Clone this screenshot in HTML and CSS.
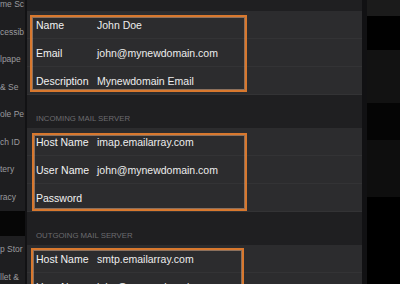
FILE: index.html
```html
<!DOCTYPE html>
<html lang="en">
<head>
  <meta charset="UTF-8">
  <meta name="viewport" content="width=device-width, initial-scale=1.0">
  <title>Mail Account Settings</title>
  <link rel="stylesheet" href="styles.css">
</head>
<body>

  <div class="screen">
    <div class="sidebar">
      <ul class="side-list first">
        <li>me Sc</li>
        <li>cessib</li>
        <li>lpape</li>
        <li>&amp; Se</li>
        <li>ole Pe</li>
        <li>ch ID</li>
        <li>tery</li>
        <li>racy</li>
      </ul>
      <div class="side-gap"></div>
      <ul class="side-list">
        <li>p Stor</li>
        <li>llet &amp;</li>
      </ul>
    </div>

    <div class="divider"></div>

    <div class="main">
      <div class="top-gap"></div>

      <div class="group">
        <div class="row"><span class="label">Name</span><span class="value">John Doe</span></div>
        <div class="row"><span class="label">Email</span><span class="value">john@mynewdomain.com</span></div>
        <div class="row"><span class="label">Description</span><span class="value">Mynewdomain Email</span></div>
        <div class="highlight hl-account"></div>
      </div>

      <div class="section-header">Incoming Mail Server</div>

      <div class="group">
        <div class="row"><span class="label">Host Name</span><span class="value">imap.emailarray.com</span></div>
        <div class="row"><span class="label">User Name</span><span class="value">john@mynewdomain.com</span></div>
        <div class="row"><span class="label">Password</span><span class="value"></span></div>
        <div class="highlight hl-incoming"></div>
      </div>

      <div class="section-header">Outgoing Mail Server</div>

      <div class="group">
        <div class="row"><span class="label">Host Name</span><span class="value">smtp.emailarray.com</span></div>
        <div class="row"><span class="label">User Name</span><span class="value">john@mynewdomain.com</span></div>
        <div class="highlight hl-outgoing"></div>
      </div>
    </div>

    <div class="backdrop">
      <div class="band b1"></div>
      <div class="band b2"></div>
      <div class="band b3"></div>
      <div class="band b4"></div>
      <div class="band b5"></div>
      <div class="band b6"></div>
    </div>
  </div>

</body>
</html>
```

FILE: styles.css
```css
body {
  margin: 0;
  padding: 0;
  background: #000;
  font-family: 'Liberation Sans', Arial, sans-serif;
  overflow: hidden;
}

.screen {
  display: flex;
  width: 400px;
  height: 284px;
  overflow: hidden;
}

.sidebar {
  width: 25px;
  flex-shrink: 0;
  background-color: #1e1e20;
  overflow: hidden;
  white-space: nowrap;
}

.side-list {
  list-style: none;
  margin: 0;
  padding: 0;
}

.side-list.first {
  margin-top: -9px;
}

.side-list li {
  height: 27.5px;
  line-height: 27.5px;
  font-size: 8.5px;
  color: #9a9a9e;
}

.side-gap {
  height: 25px;
  background-color: #060606;
}

.divider {
  width: 2px;
  flex-shrink: 0;
  background-color: #121214;
}

.main {
  width: 335px;
  flex-shrink: 0;
  background-color: #1f1f21;
}

.top-gap {
  height: 11px;
}

.group {
  position: relative;
  background-color: #2c2c2e;
}

.row {
  display: flex;
  align-items: center;
  height: 27px;
  border-bottom: 1px solid #333335;
  font-size: 10.5px;
  color: #f2f2f2;
}

.row:last-of-type {
  border-bottom: none;
  height: 28px;
}

.label {
  width: 61px;
  padding-left: 9px;
  flex-shrink: 0;
}

.value {
  color: #ededed;
}

.section-header {
  height: 33px;
  box-sizing: border-box;
  padding: 19px 0 0 9px;
  font-size: 7.8px;
  text-transform: uppercase;
  color: #6c6c70;
}

/* annotation boxes drawn over the cells */
.highlight {
  position: absolute;
  border: 2px solid #d8782e;
  box-shadow: inset 0 0 0 1px rgba(255, 196, 150, 0.45);
}

.hl-account {
  left: 3px;
  top: 4px;
  width: 213px;
  height: 73px;
}

.hl-incoming {
  left: 5px;
  top: 5px;
  width: 211px;
  height: 74px;
}

.hl-outgoing {
  left: 4px;
  top: 3px;
  width: 209px;
  height: 80px;
}

.backdrop {
  flex: 1;
  display: flex;
  flex-direction: column;
  background-color: #000;
  border-left: 5px solid #111113;
}

.b1 { height: 16px; background-color: #1b1b1b; }
.b2 { height: 34px; background-color: #010101; }
.b3 { height: 53px; background-color: #121212; }
.b4 { height: 37px; background-color: #050505; }
.b5 { height: 57px; background-color: #0e0e0e; }
.b6 { flex: 1; background-color: #000; }
```
